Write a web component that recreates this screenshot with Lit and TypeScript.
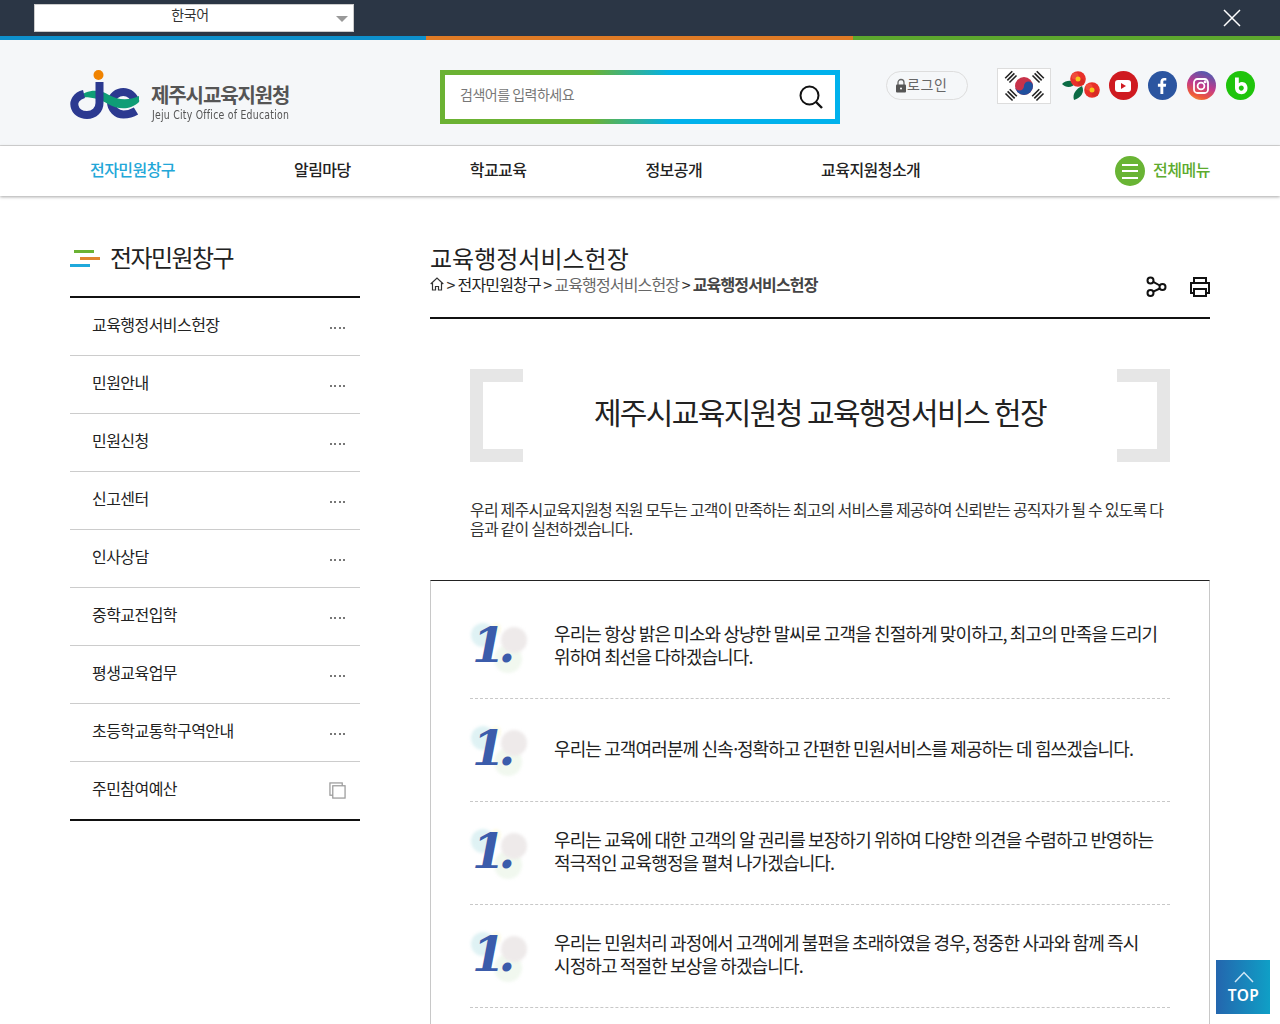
import { LitElement, html, css, svg, unsafeCSS } from "lit";
import { customElement } from "lit/decorators.js";

const FONT = unsafeCSS(`"Noto Sans CJK KR", "Noto Sans", sans-serif`);

const side = ["교육행정서비스헌장", "민원안내", "민원신청", "신고센터", "인사상담", "중학교전입학", "평생교육업무", "초등학교통학구역안내", "주민참여예산"];
const pledges = [
  [html`우리는 항상 밝은 미소와 상냥한 말씨로 고객을 친절하게 맞이하고, 최고의 만족을 드리기`, html`위하여 최선을 다하겠습니다.`],
  [html`우리는 고객여러분께 신속<span class="mid">·</span>정확하고 간편한 민원서비스를 제공하는 데 힘쓰겠습니다.`],
  [html`우리는 교육에 대한 고객의 알 권리를 보장하기 위하여 다양한 의견을 수렴하고 반영하는`, html`적극적인 교육행정을 펼쳐 나가겠습니다.`],
  [html`우리는 민원처리 과정에서 고객에게 불편을 초래하였을 경우, 정중한 사과와 함께 즉시`, html`시정하고 적절한 보상을 하겠습니다.`],
];

const logo = svg`<svg class="logo" viewBox="65 65 80 60" width="80" height="60">
  <circle cx="98.500" cy="75" r="5" fill="#f08300"/>
  <path d="M135.500 102A12.500 12.500 0 0 0 111 102A12.500 12.500 0 0 0 123.500 114.500C128 114.500 132 113.500 136 111" fill="none" stroke="#2b3990" stroke-width="8"/>
  <path d="M78 98C86 89 100 89 109 95C118 100 128 101 139 96L139 102C131 110 118 110 108 104C100 99 88 96 78 98Z" fill="#0f9d76"/>
  <path d="M84 94C76 96 73.500 102 74.500 106C75.500 111 80 115 87 115C94 115 99.500 110 99.500 103V82" fill="none" stroke="#2b3990" stroke-width="8"/>
</svg>`;

const rays = (x: number, y: number, r: number) => svg`<g transform="translate(${x} ${y}) rotate(${r})" fill="#222">
  <rect x="-5" y="-4" width="10" height="1.600"/><rect x="-5" y="-1" width="10" height="1.600"/><rect x="-5" y="2" width="10" height="1.600"/></g>`;
const flag = svg`<svg class="flag" viewBox="0 0 54 36" width="54" height="36">
  <rect x=".5" y=".5" width="53" height="35" fill="#fff" stroke="#ddd"/>
  ${rays(14, 9, -45)}${rays(41, 9, 45)}${rays(14, 27, 45)}${rays(41, 27, -45)}
  <circle cx="27" cy="18" r="9" fill="#c8334a"/>
  <path d="M18 18A9 9 0 0 0 36 18A4.500 4.500 0 0 0 27 18A4.500 4.500 0 0 1 18 18Z" fill="#21509e"/>
</svg>`;
const bloom = (x: number, y: number) => svg`<g transform="translate(${x} ${y})">
  <circle r="7.800" fill="#e8302a"/><circle cx="-3" cy="-3" r="3.500" fill="#f04b3a"/><circle cx="3" cy="3" r="3.500" fill="#d92a24"/>
  <circle r="2.500" fill="#f7c61a"/></g>`;
const camellia = svg`<svg class="flower" viewBox="0 0 40 30" width="40" height="30">
  <path d="M1 13C5 9 11 9 15 12C11 17 5 17 1 13Z" fill="#0b6b45"/>
  <path d="M13 29C11 23 15 18 21 15C24 21 20 27 13 29Z" fill="#0b6b45"/>
  ${bloom(17, 8)}${bloom(31, 19)}
</svg>`;

const round = (bg: string, inner: unknown) => html`<span class="soc" style="background:${bg}">${inner}</span>`;
const ytIcon = svg`<svg viewBox="0 0 30 30" width="30" height="30"><rect x="7" y="9" width="16" height="12" rx="3" fill="#fff"/><path d="M13 12L18 15L13 18Z" fill="#cf1a20"/></svg>`;
const fbIcon = svg`<svg viewBox="0 0 30 30" width="30" height="30"><path d="M16.300 23V15.800H18.800L19.200 12.800H16.300V11C16.300 10.100 16.600 9.600 17.800 9.600H19.300V7C19 7 18.100 6.900 17.100 6.900C14.900 6.900 13.400 8.300 13.400 10.700V12.800H10.900V15.800H13.400V23Z" fill="#fff"/></svg>`;
const igIcon = svg`<svg viewBox="0 0 30 30" width="30" height="30" fill="none" stroke="#fff" stroke-width="1.800"><rect x="8" y="8" width="14" height="14" rx="3.500"/><circle cx="15" cy="15" r="3.400"/><circle cx="19.200" cy="10.800" r=".6" fill="#fff"/></svg>`;
const bIcon = svg`<svg viewBox="0 0 30 30" width="30" height="30"><path d="M10 6.500H13.800V12.300C14.800 11.400 15.900 11 17 11C20.500 11 22.500 13.800 22.500 17C22.500 20.400 20.200 23.200 16.500 23.200C12.800 23.200 10 20.800 10 17ZM16.300 14.500C14.800 14.500 13.800 15.600 13.800 17.100C13.800 18.600 14.800 19.700 16.300 19.700C17.800 19.700 18.800 18.600 18.800 17.100C18.800 15.600 17.800 14.500 16.300 14.500Z" fill="#fff" fill-rule="evenodd"/></svg>`;

@customElement("pledge-mark")
class PledgeMark extends LitElement {
  static styles = css`
    :host { display: block; width: 60px; height: 60px; position: relative; flex: none; }
    .c { position: absolute; border-radius: 50%; filter: blur(1.500px); }
    .a { left: 1px; top: 6px; width: 24px; height: 24px; background: #dff2f4; }
    .b { left: 31px; top: 10px; width: 26px; height: 26px; background: #eeeaea; }
    .d { left: 24px; top: 28px; width: 28px; height: 28px; background: #f1f8ef; }
    .e { left: 21px; top: 6px; width: 10px; height: 12px; background: #fdfbe6; }
    .n { position: absolute; left: 2px; top: -7px; font: italic 700 48px/70px "DejaVu Serif", serif; color: #3b5cab; letter-spacing: -7px; }
  `;
  render() {
    return html`<i class="c a"></i><i class="c d"></i><i class="c e"></i><i class="c b"></i><span class="n">1.</span>`;
  }
}

@customElement("app-root")
class AppRoot extends LitElement {
  static styles = css`
    :host { display: block; height: 1024px; overflow: hidden; position: relative; background: #fff; font-family: ${FONT}; color: #222; }
    * { box-sizing: border-box; }
    .top { height: 36px; background: #2b3645; padding: 4px 36px 0 34px; display: flex; justify-content: space-between; }
    .lang { width: 320px; height: 28px; background: #fff; border: 1px solid #ccc; position: relative; text-align: center; font-size: 14px; line-height: 18px; color: #333; letter-spacing: -.3px; padding-right: 8px; }
    .lang::after { content: ""; position: absolute; right: 5px; top: 11px; border: 6px solid transparent; border-top: 6px solid #999; border-bottom: 0; }
    .close { margin-top: 4px; width: 20px; height: 20px; margin-right: 2px; }
    .stripe { height: 4px; display: grid; grid-template-columns: 426px 427px 427px; }
    .stripe i:nth-child(1) { background: #0e90cc; }
    .stripe i:nth-child(2) { background: #e07b25; }
    .stripe i:nth-child(3) { background: #5da82e; }
    .head { height: 106px; background: #f5f7f9; border-bottom: 1px solid #d7d7d7; display: flex; align-items: flex-start; padding: 25px 0 0 65px; }
    .logo { display: block; flex: none; }
    .brand { margin: 17px 0 0 6px; width: 150px; height: 40px; }
    .brand b { display: block; font-size: 20px; line-height: 26px; font-weight: 700; color: #555; letter-spacing: -1.1px; white-space: nowrap; }
    .brand span { display: block; margin-left: 1px; font: 12px/14px "Liberation Sans Narrow", "DejaVu Sans Condensed", "Liberation Sans", sans-serif; color: #555; letter-spacing: .28px; white-space: nowrap; transform: scaleX(.865); transform-origin: left; }
    .search { margin: 5px 0 0 139px; width: 400px; height: 54px; padding: 5px; background: linear-gradient(90deg, #6bb233 0 38%, #00b1ec 58%); }
    .search div { height: 100%; background: #fff; display: flex; align-items: center; justify-content: space-between; padding: 0 11px 0 15px; font-size: 14px; color: #777; letter-spacing: -.5px; }
    .search span { margin-bottom: 6px; }
    .login { margin: 6px 0 0 46px; width: 82px; height: 29px; border: 1px solid #ddd; border-radius: 15px; display: flex; align-items: center; padding-left: 8px; font-size: 14px; color: #666; letter-spacing: .6px; }
    .login span { margin-bottom: 4px; }
    .icons { margin: 3px 0 0 29px; display: flex; align-items: center; height: 36px; }
    .flag { display: block; margin-right: 10px; }
    .flower { display: block; margin-right: 2.500px; }
    .soc { width: 29px; height: 29px; border-radius: 50%; margin: 0 0 1px 10px; display: flex; align-items: center; justify-content: center; overflow: hidden; }
    .soc svg { flex: none; display: block; }
    .flower + .soc { margin-left: 5px; }
    nav { height: 50px; background: #fff; box-shadow: 0 1px 3px rgba(0,0,0,.35); display: flex; align-items: center; padding: 0 70px 4px 90px; gap: 119px; font-size: 16px; font-weight: 500; color: #222; letter-spacing: -.55px; position: relative; white-space: nowrap; }
    nav .on { color: #22a7d8; }
    nav .all { margin-left: auto; display: flex; align-items: center; gap: 8px; color: #5dab2e; letter-spacing: -.5px; }
    .burger { width: 30px; height: 30px; border-radius: 50%; background: #69b434; display: flex; flex-direction: column; justify-content: center; gap: 4.500px; padding: 0 7px; transform: translateY(2px); }
    .burger i { height: 2px; background: #fff; }
    .body { display: flex; padding: 44px 70px 0; }
    aside { width: 290px; flex: none; }
    .stitle { height: 56px; display: flex; align-items: flex-start; gap: 10px; font-size: 24px; line-height: 34px; letter-spacing: -1.6px; }
    .bars { width: 30px; margin-top: 10px; height: 18px; position: relative; flex: none; }
    .bars i { position: absolute; height: 3px; }
    .bars i:nth-child(1) { left: 4px; top: 0; width: 20px; background: #6bb233; }
    .bars i:nth-child(2) { left: 10px; top: 7px; width: 20px; background: #e0852f; }
    .bars i:nth-child(3) { left: 0; top: 14px; width: 20px; background: #1fa9dc; }
    ul { list-style: none; margin: 0; padding: 0; border-top: 2px solid #111; border-bottom: 2px solid #111; }
    li { height: 58px; display: flex; align-items: center; justify-content: space-between; padding: 0 15px 5px 22px; font-size: 16px; letter-spacing: -.55px; color: #222; border-bottom: 1px solid #ccc; }
    li:last-child { border-bottom: 0; height: 57px; }
    .dots { width: 15px; display: flex; justify-content: space-between; margin-top: 8px; }
    .dots i { width: 2px; height: 2px; background: #777; }
    .ext { display: block; margin-top: 5px; margin-right: -1px; }
    main { margin-left: 70px; width: 780px; flex: none; }
    .mhead { height: 79px; padding-top: 2px; border-bottom: 2px solid #111; position: relative; }
    h2 { margin: 0; font-size: 24px; font-weight: 400; line-height: 32px; letter-spacing: 0; color: #222; }
    .crumb { display: flex; align-items: center; font-size: 16px; line-height: 20px; letter-spacing: -.85px; white-space: nowrap; }
    .crumb .g { color: #666; }
    .crumb b { font-weight: 700; color: #444; }
    .crumb em { font-style: normal; margin: 0 3px 0 2.500px; color: #333; }
    .tools { position: absolute; right: -1px; top: 36px; display: flex; gap: 22px; }
    .tools svg { display: block; }
    .title { margin: 50px 40px 0; height: 93px; display: flex; align-items: center; justify-content: center; position: relative; font-size: 30px; letter-spacing: -1.6px; color: #222; padding-bottom: 9px; }
    .title i { position: absolute; top: 0; width: 53px; height: 93px; border: 13px solid #e6e6e6; }
    .title i:first-child { left: 0; border-right: 0; }
    .title i:last-child { right: 0; border-left: 0; }
    .intro { margin: 38px 40px 0; font-size: 16px; line-height: 19px; letter-spacing: -.8px; color: #333; height: 80px; word-break: break-all; }
    .box { border: 1px solid #c8c8c8; border-top: 1px solid #222; padding: 0 39px; height: 600px; }
    .p { height: 103px; border-bottom: 1px dashed #c8c8c8; display: flex; align-items: center; gap: 24px; }
    .p:first-child { height: 118px; padding-top: 15px; }
    .p div { font-size: 18px; line-height: 23px; letter-spacing: -.88px; color: #222; white-space: nowrap; margin-bottom: 4px; }
    .mid { letter-spacing: -4px; margin-left: -2px; }
    .totop { position: absolute; left: 1216px; top: 960px; width: 54px; height: 54px; background: linear-gradient(90deg, #2466ae, #0f9fc6); color: #fff; display: flex; flex-direction: column; align-items: center; font: 600 15.500px/16px "Noto Sans", sans-serif; padding: 11px 0 0 1px; letter-spacing: .5px; }
    .totop svg { display: block; margin-bottom: 4px; }
  `;

  render() {
    return html`
      <div class="top">
        <div class="lang">한국어</div>
        <svg class="close" viewBox="0 0 20 20"><path d="M2 2L18 18M18 2L2 18" stroke="#fff" stroke-width="1.500"/></svg>
      </div>
      <div class="stripe"><i></i><i></i><i></i></div>
      <div class="head">
        ${logo}
        <div class="brand"><b>제주시교육지원청</b><span>Jeju City Office of Education</span></div>
        <div class="search"><div><span>검색어를 입력하세요</span>
          <svg viewBox="0 0 26 26" width="26" height="26" fill="none" stroke="#111"><circle cx="11.500" cy="11.500" r="9" stroke-width="2"/><path d="M18 18L24 24" stroke-width="2.400"/></svg>
        </div></div>
        <div class="login">
          <svg viewBox="0 0 12 15" width="12" height="15"><path d="M3 7V4.500A3 3 0 0 1 9 4.500V7" fill="none" stroke="#666" stroke-width="1.300"/><rect x="1" y="6.500" width="10" height="8" rx="1" fill="#555"/><circle cx="6" cy="10.500" r="1" fill="#fff"/></svg><span>로그인</span>
        </div>
        <div class="icons">
          ${flag}${camellia}
          ${round("#cf1a20", ytIcon)}
          ${round("#2b55a0", fbIcon)}
          ${round("linear-gradient(200deg,#4f5bb0 10%,#c13a8c 50%,#ee5a3a 80%,#f6b13a)", igIcon)}
          ${round("#1fc40c", bIcon)}
        </div>
      </div>
      <nav>
        <span class="on">전자민원창구</span><span>알림마당</span><span>학교교육</span><span>정보공개</span><span>교육지원청소개</span>
        <span class="all"><span class="burger"><i></i><i></i><i></i></span>전체메뉴</span>
      </nav>
      <div class="body">
        <aside>
          <div class="stitle"><span class="bars"><i></i><i></i><i></i></span>전자민원창구</div>
          <ul>
            ${side.map((s, i) => html`<li>${s}${i < side.length - 1
              ? html`<span class="dots"><i></i><i></i><i></i><i></i></span>`
              : html`<svg class="ext" viewBox="0 0 18 18" width="17" height="17" fill="#fff" stroke="#999" stroke-width="1.300"><rect x="1" y="1" width="13" height="13"/><rect x="4" y="4" width="13" height="13"/></svg>`}</li>`)}
          </ul>
        </aside>
        <main>
          <div class="mhead">
            <h2>교육행정서비스헌장</h2>
            <div class="crumb">
              <svg viewBox="0 0 14 14" width="14" height="14" fill="none" stroke="#333" stroke-width="1.200"><path d="M.7 7L7 1L13.300 7M2.500 6V13H5.500V9.500H8.500V13H11.500V6"/></svg>
              <em>&gt;</em><span>전자민원창구</span><em>&gt;</em><span class="g">교육행정서비스헌장</span><em>&gt;</em><b>교육행정서비스헌장</b>
            </div>
            <div class="tools">
              <svg viewBox="0 0 22 22" width="22" height="22" fill="none" stroke="#111" stroke-width="2"><circle cx="5.500" cy="4.500" r="3"/><circle cx="5.500" cy="17" r="3"/><circle cx="17.500" cy="11" r="3"/><path d="M8.300 5.800L14.800 9.500M8.300 15.700L14.800 12.500"/></svg>
              <svg viewBox="0 0 22 22" width="22" height="22" fill="none" stroke="#111" stroke-width="2"><path d="M5 7V2H17V7M5 17H2V7H20V17H17"/><rect x="5" y="13" width="12" height="7"/></svg>
            </div>
          </div>
          <div class="title"><i></i>제주시교육지원청 교육행정서비스 헌장<i></i></div>
          <div class="intro">우리 제주시교육지원청 직원 모두는 고객이 만족하는 최고의 서비스를 제공하여 신뢰받는 공직자가 될 수 있도록 다음과 같이 실천하겠습니다.</div>
          <div class="box">
            ${pledges.map(p => html`<div class="p"><pledge-mark></pledge-mark><div>${p.map((l, i) => html`${i ? html`<br />` : ""}${l}`)}</div></div>`)}
          </div>
        </main>
      </div>
      <div class="totop">
        <svg viewBox="0 0 20 12" width="20" height="12" fill="none" stroke="#cfe6f5" stroke-width="1.500"><path d="M1 11L10 1.500L19 11"/></svg>
        TOP
      </div>
    `;
  }
}
